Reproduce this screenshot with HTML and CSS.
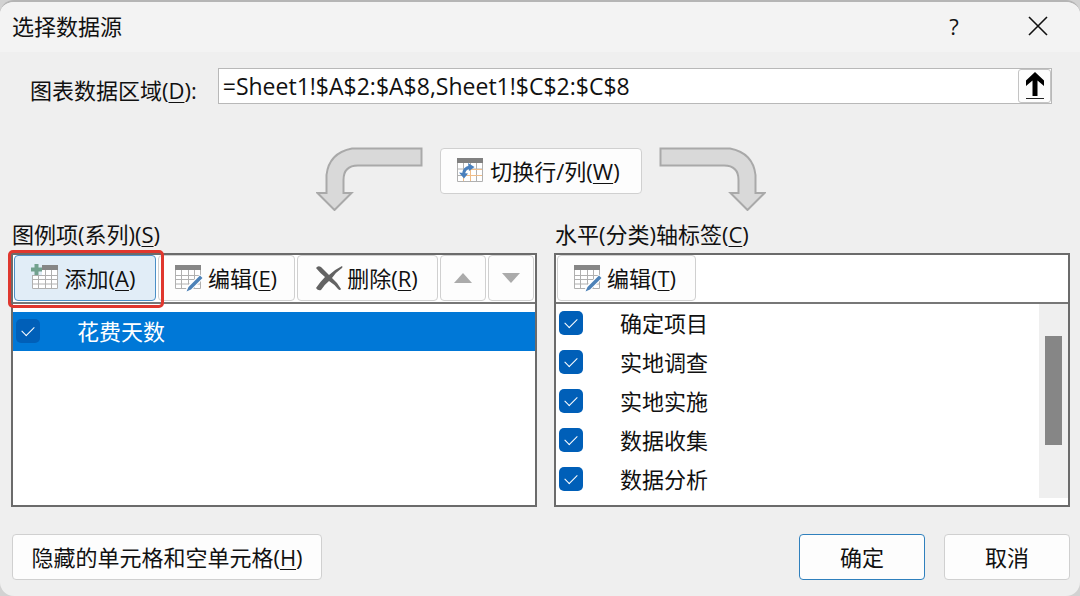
FILE: index.html
```html
<!DOCTYPE html>
<html lang="zh-CN">
<head>
    <meta charset="UTF-8">
    <title>选择数据源</title>
    <link rel="stylesheet" href="styles.css">
</head>
<body>
    <svg width="0" height="0" class="symbols">
        <symbol id="table" viewBox="0 0 30 28">
            <rect x="1" y="2" width="26" height="23" fill="#fff"/>
            <path d="M1.5 6v18.5h25V6M1 11.5h26M1 15.5h26M1 20h26M7.5 6v19M14.5 6v19M20.5 6v19" fill="none" stroke="#b0b0b0"/>
            <rect x="1" y="1" width="26" height="5" fill="#868686"/>
        </symbol>
        <symbol id="edit" viewBox="0 0 30 28">
            <use href="#table"/>
            <path d="M11 28l2-6L26 10.500l4 3.500L17 27z" fill="#fff"/>
            <path d="M12.500 27.500l2-4.500L26 11.500l2.500 2.500L17 25.500z" fill="#4d82b8"/>
        </symbol>
        <symbol id="arrow" viewBox="0 0 107 64">
            <path d="M105.500 1.500v17H42Q27.500 18.500 27.500 33V46h8L18.500 63 1.500 46h9V28Q13 6 36 1.500z" fill="#d9d9d9" stroke="#a9a9a9" stroke-width="2"/>
        </symbol>
    </svg>
    <div class="dialog">
        <div class="title-bar">
            <span class="title">选择数据源</span>
            <button class="title-button" aria-label="帮助">?</button>
            <button class="title-button" aria-label="关闭">
                <svg width="20" height="20" viewBox="0 0 20 20"><path d="M1 1l18 18M19 1L1 19" stroke="#111" stroke-width="1.6"/></svg>
            </button>
        </div>

        <div class="range-row">
            <label for="range">图表数据区域(<u>D</u>):</label>
            <div class="range-box">
                <input type="text" id="range" value="=Sheet1!$A$2:$A$8,Sheet1!$C$2:$C$8">
                <button class="pick-button" aria-label="折叠">
                    <svg width="20" height="30" viewBox="0 0 20 30"><path d="M10 1l9 8.500v5.500l-6.500-5.500V25h-5V9.500L1 15V9.500z" fill="#000"/><path d="M1 27.500h18" stroke="#222"/></svg>
                </button>
            </div>
        </div>

        <div class="switch-row">
            <svg width="107" height="64"><use href="#arrow"/></svg>
            <button class="button switch-button">
                <svg width="30" height="28" viewBox="0 0 30 28">
                    <rect x="1" y="2" width="26" height="23" fill="#fff"/>
                    <path d="M1.500 6v18.500h25V6M7.500 6v19M14.500 6v19M20.500 6v19M1 12h26M1 18.500h26" fill="none" stroke="#b0b0b0"/>
                    <path d="M13 12.500h13M9 18.500h17M14.500 12v12M7.500 20v4" fill="none" stroke="#f0bd88"/>
                    <rect x="1" y="1" width="26" height="5" fill="#808080"/>
                    <path d="M7.500 17.500Q8 11 14 10" fill="none" stroke="#4a80bd" stroke-width="3"/>
                    <path d="M12 6l6.500 4L13 14zM3 15.500l9 1-4 5z" fill="#4a80bd"/>
                </svg>
                <span>切换行/列(<u>W</u>)</span>
            </button>
            <svg class="flip" width="107" height="64"><use href="#arrow"/></svg>
        </div>

        <div class="panels">
            <div class="group">
                <div class="group-label">图例项(系列)(<u>S</u>)</div>
                <div class="panel">
                    <div class="toolbar">
                        <button class="button add-button">
                            <svg width="30" height="28" viewBox="0 0 30 28"><use href="#table"/><path d="M0 0h11v11H0z" fill="#e1edf7"/><path d="M5.500 0v11M0 5.500h11" stroke="#72a18e" stroke-width="4"/></svg>
                            <span>添加(<u>A</u>)</span>
                        </button>
                        <button class="button edit-button">
                            <svg width="30" height="28"><use href="#edit"/></svg>
                            <span>编辑(<u>E</u>)</span>
                        </button>
                        <button class="button delete-button">
                            <svg width="28" height="26" viewBox="0 0 28 26"><path d="M1 3Q3 0 6 2l8 8Q19 5 27 1q1 1 0 2-6 4-10 10 6 5 9 11-1 2-3 0-4-5-9-8-5 4-8 9-3 1-5-2 4-6 9-11Q5 8 1 3z" fill="#636363"/></svg>
                            <span>删除(<u>R</u>)</span>
                        </button>
                        <button class="button move-button" aria-label="上移">
                            <svg width="18" height="10" viewBox="0 0 18 10"><path d="M9 0l9 10H0z" fill="#ababab"/></svg>
                        </button>
                        <button class="button move-button" aria-label="下移">
                            <svg width="18" height="10" viewBox="0 0 18 10"><path d="M9 10l9-10H0z" fill="#ababab"/></svg>
                        </button>
                    </div>
                    <div class="list series">
                        <label class="item selected"><input type="checkbox" checked><span>花费天数</span></label>
                    </div>
                </div>
            </div>

            <div class="group">
                <div class="group-label">水平(分类)轴标签(<u>C</u>)</div>
                <div class="panel">
                    <div class="toolbar">
                        <button class="button axis-button">
                            <svg width="30" height="28"><use href="#edit"/></svg>
                            <span>编辑(<u>T</u>)</span>
                        </button>
                    </div>
                    <div class="list categories">
                        <div class="items">
                            <label class="item"><input type="checkbox" checked><span>确定项目</span></label>
                            <label class="item"><input type="checkbox" checked><span>实地调查</span></label>
                            <label class="item"><input type="checkbox" checked><span>实地实施</span></label>
                            <label class="item"><input type="checkbox" checked><span>数据收集</span></label>
                            <label class="item"><input type="checkbox" checked><span>数据分析</span></label>
                        </div>
                        <div class="scrollbar"><div class="thumb"></div></div>
                    </div>
                </div>
            </div>
        </div>

        <div class="footer">
            <button class="button hidden-cells"><span>隐藏的单元格和空单元格(<u>H</u>)</span></button>
            <button class="button action primary">确定</button>
            <button class="button action">取消</button>
        </div>
    </div>
</body>
</html>
```

FILE: styles.css
```css
* {
    box-sizing: border-box;
}

body {
    margin: 0;
    background-color: #d2d2d2;
    color: #111;
    font-family: "Open Sans", "Noto Sans CJK SC", sans-serif;
    font-size: 22px;
    line-height: 28px;
}

button, input {
    font: inherit;
    color: inherit;
}

button {
    padding: 0;
}

svg {
    display: block;
    flex: none;
}

u {
    text-decoration-thickness: 1px;
    text-underline-offset: 3px;
}

.symbols {
    position: absolute;
}

.dialog {
    display: flex;
    flex-direction: column;
    min-height: 100vh;
    border-top: 2px solid #b5b5b5;
    border-radius: 14px;
    background-color: #efefef;
    overflow: hidden;
}

.title-bar {
    display: flex;
    align-items: center;
    height: 50px;
    padding: 0 0 2px 12px;
    background-color: #f3f3f3;
}

.title {
    flex: 1;
}

.title-button {
    display: flex;
    align-items: center;
    justify-content: center;
    width: 84px;
    height: 48px;
    border: none;
    background: none;
}

/* chart data range */
.range-row {
    display: flex;
    align-items: flex-end;
    gap: 21px;
    padding: 16px 28px 0 30px;
}

.range-box {
    display: flex;
    flex: 1;
    height: 36px;
    border: 1px solid #b8b8b8;
    background-color: #fff;
}

.range-box input {
    flex: 1;
    min-width: 0;
    padding: 0 4px;
    border: none;
    outline: none;
    background: none;
    font-size: 23px;
}

.pick-button {
    display: flex;
    align-items: center;
    justify-content: center;
    width: 33px;
    border: 1px solid #c4c4c4;
    border-radius: 3px;
    background-color: #fdfdfd;
}

.button {
    display: flex;
    align-items: center;
    justify-content: center;
    gap: 4px;
    height: 46px;
    border: 1px solid #d0d0d0;
    border-radius: 4px;
    background-color: #fdfdfd;
    white-space: nowrap;
}

.switch-row {
    display: flex;
    justify-content: center;
    gap: 17px;
    padding: 43px 0 8px 2px;
}

.switch-button {
    width: 202px;
    margin-top: 1px;
    padding-right: 6px;
}

.flip {
    transform: scaleX(-1);
}

/* series and category panels */
.panels {
    display: grid;
    grid-template-columns: 526fr 516fr;
    gap: 17px;
    flex: 1;
    padding: 0 10px 0 11px;
}

.group {
    display: flex;
    flex-direction: column;
}

.group-label {
    height: 34px;
    padding-left: 1px;
    line-height: 30px;
}

.panel {
    display: flex;
    flex-direction: column;
    flex: 1;
    border: 2px solid #6b6b6b;
    background-color: #fff;
}

.toolbar {
    display: flex;
    gap: 2px;
    height: 49px;
    padding: 0 1px;
    border-bottom: 2px solid #777;
}

.add-button {
    position: relative;
    width: 142px;
    padding-right: 4px;
    border-color: #4a8fc7;
    background-color: #e1edf7;
}

/* red frame round the add button */
.add-button::after {
    content: "";
    position: absolute;
    top: -6px;
    right: -9px;
    bottom: -8px;
    left: -7px;
    border: 3px solid #e0372e;
    border-radius: 5px;
}

.edit-button {
    width: 137px;
    padding-right: 2px;
}

.delete-button {
    width: 141px;
    padding-right: 2px;
}

.move-button {
    width: 46px;
}

.axis-button {
    width: 139px;
    padding-right: 4px;
}

.list {
    flex: 1;
}

.series {
    padding-top: 8px;
}

.categories {
    display: flex;
}

.items {
    flex: 1;
}

.item {
    display: flex;
    align-items: center;
    gap: 37px;
    height: 39px;
    padding: 0 0 2px 3px;
}

.item.selected {
    background-color: #0078d7;
    color: #fff;
}

.item input {
    display: grid;
    place-items: center;
    appearance: none;
    width: 24px;
    height: 24px;
    margin: 0;
    border-radius: 5px;
    background-color: #005fb8;
}

.item input:checked::after {
    content: "";
    width: 11px;
    height: 6px;
    margin-bottom: 3px;
    border-bottom: 1px solid #fff;
    border-left: 1px solid #fff;
    transform: rotate(-45deg);
}

.scrollbar {
    width: 29px;
    margin-bottom: 7px;
    padding: 32px 6px 0;
    background-color: #efefef;
}

.thumb {
    height: 109px;
    background-color: #868686;
}

.footer {
    display: flex;
    gap: 19px;
    padding: 27px 10px 16px 12px;
}

.hidden-cells {
    width: 310px;
    margin-right: auto;
}

.action {
    width: 126px;
}

.primary {
    border-color: #2f80bd;
}
```
